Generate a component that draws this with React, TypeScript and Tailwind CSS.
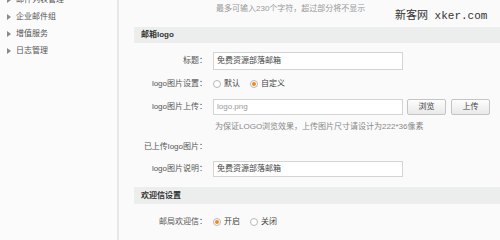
import React from "react";

const font = { fontFamily: '"Liberation Sans", "Noto Sans CJK SC", sans-serif' };

function Radio({ checked, label }: { checked?: boolean; label: string }) {
  return (
    <label className="flex items-center gap-[3px] mr-[10px]">
      <span className="w-[8px] h-[8px] rounded-full border border-[#b9b9b9] bg-white flex items-center justify-center">
        {checked && <span className="w-[4px] h-[4px] rounded-full bg-[#f08a1c]" />}
      </span>
      <span className="text-[8px] text-[#444]">{label}</span>
    </label>
  );
}

function Row({ label, children, className }: { label: string; children?: React.ReactNode; className?: string }) {
  return (
    <div className={"flex items-center " + (className || "")}>
      <div className="w-[73px] text-right text-[8px] text-[#555] whitespace-nowrap">{label}</div>
      <div className="ml-[6px] flex items-center">{children}</div>
    </div>
  );
}

function Field({ value, muted }: { value: string; muted?: boolean }) {
  return (
    <div
      className={
        "w-[190px] h-[18px] border border-[#d4d4d4] bg-white px-[3px] flex items-center text-[8px] " +
        (muted ? "text-[#999]" : "text-[#444]")
      }
    >
      {value}
    </div>
  );
}

function Btn({ label }: { label: string }) {
  return (
    <button className="w-[39px] h-[16px] border border-[#c4c4c4] rounded-[2px] bg-gradient-to-b from-[#fdfdfd] to-[#e9e9e9] text-[8px] text-[#444] flex items-center justify-center">
      {label}
    </button>
  );
}

export default function App() {
  const menu = ["企业邮件组", "增值服务", "日志管理"];
  return (
    <div style={font} className="w-[500px] h-[240px] overflow-hidden flex bg-[#fafafa]">
      <div className="w-[119px] shrink-0 border-r-2 border-[#e6e8e8] bg-[#fbfbfb]">
        <div className="-mt-[9px]">
          {["邮件列表管理", ...menu].map((m) => (
            <div key={m} className="h-[17px] flex items-center">
              <span className="ml-[7px] w-0 h-0 border-y-[3px] border-y-transparent border-l-[4px] border-l-[#8a8a8a]" />
              <span className="ml-[5px] text-[8px] text-[#555]">{m}</span>
            </div>
          ))}
        </div>
      </div>

      <div className="flex-1 pl-[15px]">
        <div className="h-[17px] flex items-center relative">
          <span className="ml-[82px] text-[8px] text-[#999]">最多可输入230个字符，超过部分将不显示</span>
          <span
            className="absolute left-[261px] top-[8px] text-[11px] text-[#333] whitespace-nowrap"
            style={{ fontFamily: '"Liberation Mono", "Noto Sans CJK SC", monospace' }}
          >
            新客网 xker.com
          </span>
        </div>

        <div className="mt-[10px] h-[16px] bg-[#eceeee] flex items-center pl-[7px] text-[8px] font-bold text-[#333]">
          邮箱logo
        </div>

        <Row label="标题：" className="mt-[9px] h-[18px]">
          <Field value="免费资源部落邮箱" />
        </Row>

        <Row label="logo图片设置：" className="mt-[5px] h-[18px]">
          <Radio label="默认" />
          <Radio checked label="自定义" />
        </Row>

        <Row label="logo图片上传：" className="mt-[6px] h-[16px]">
          <div className="w-[190px] h-[16px] border border-[#d4d4d4] bg-white px-[3px] flex items-center text-[8px] text-[#999]">
            logo.png
          </div>
          <div className="ml-[4px] flex gap-[5px]">
            <Btn label="浏览" />
            <Btn label="上传" />
          </div>
        </Row>

        <Row label="" className="mt-[5px] h-[14px]">
          <span className="ml-[2px] text-[8px] text-[#888] whitespace-nowrap">
            为保证LOGO浏览效果，上传图片尺寸请设计为222*36像素
          </span>
        </Row>

        <Row label="已上传logo图片：" className="mt-[6px] h-[14px]" />

        <Row label="logo图片说明：" className="mt-[7px] h-[16px]">
          <div className="w-[190px] h-[16px] border border-[#d4d4d4] bg-white px-[3px] flex items-center text-[8px] text-[#444]">
            免费资源部落邮箱
          </div>
        </Row>

        <div className="mt-[10px] h-[17px] bg-[#eceeee] flex items-center pl-[7px] text-[8px] font-bold text-[#333]">
          欢迎信设置
        </div>

        <Row label="邮局欢迎信：" className="mt-[9px] h-[18px]">
          <Radio checked label="开启" />
          <Radio label="关闭" />
        </Row>
      </div>
    </div>
  );
}
